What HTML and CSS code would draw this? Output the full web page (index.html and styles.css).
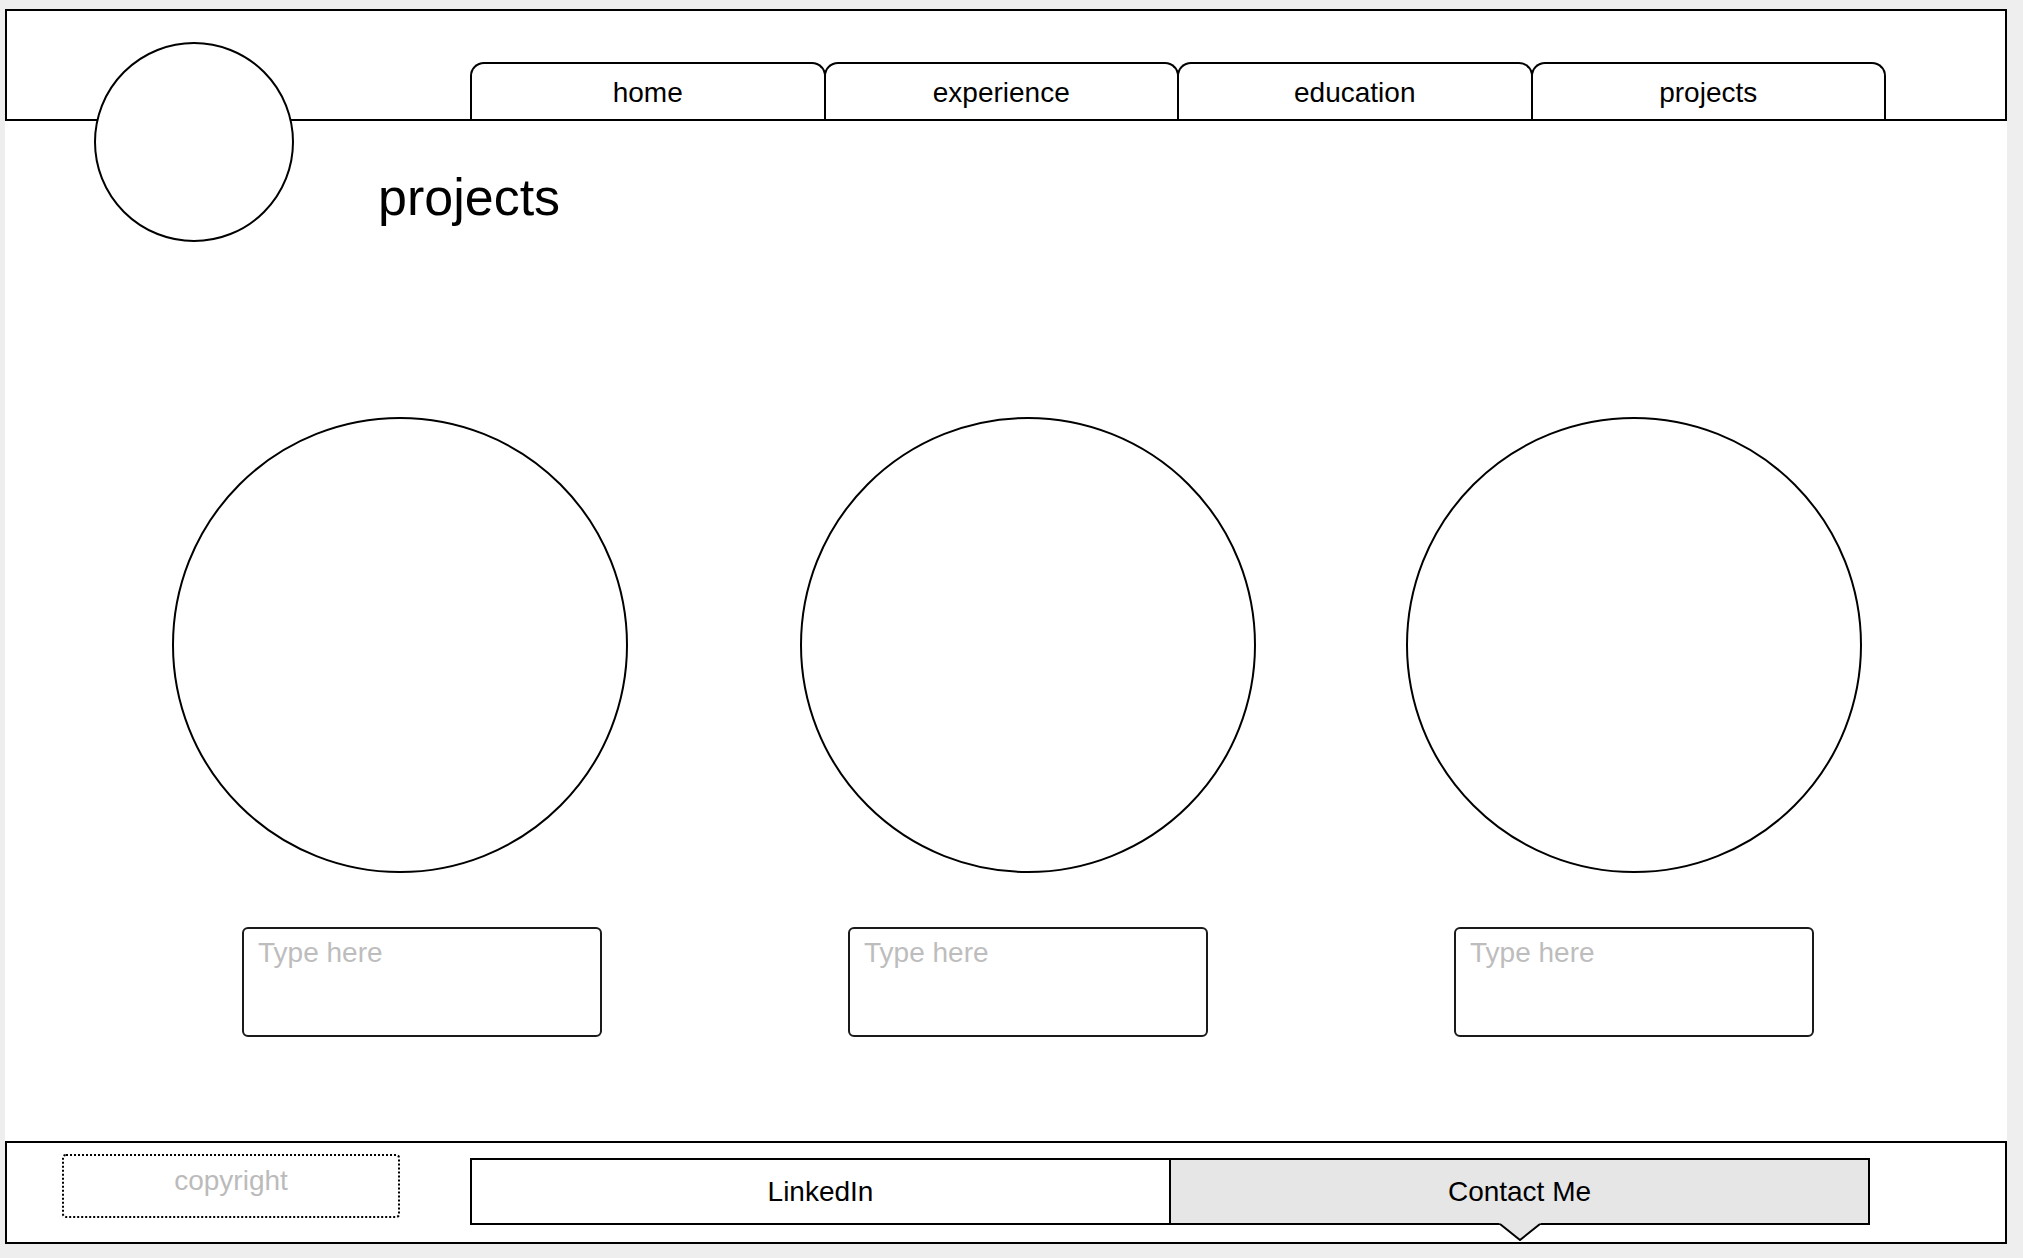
FILE: index.html
```html
<!DOCTYPE html>
<html lang="en">
<head>
    <meta charset="UTF-8">
    <meta name="viewport" content="width=device-width, initial-scale=1.0">
    <title>projects</title>
    <link rel="stylesheet" href="styles.css">
</head>
<body>

    <div class="canvas">
        <header class="site-header">
            <div class="logo"></div>
            <nav class="tabs">
                <a class="tab" href="#">home</a>
                <a class="tab" href="#">experience</a>
                <a class="tab" href="#">education</a>
                <a class="tab" href="#">projects</a>
            </nav>
        </header>

        <main class="content">
            <h1 class="page-title">projects</h1>

            <div class="projects">
                <div class="project first">
                    <div class="project-img"></div>
                    <div class="project-text">Type here</div>
                </div>
                <div class="project">
                    <div class="project-img"></div>
                    <div class="project-text">Type here</div>
                </div>
                <div class="project">
                    <div class="project-img"></div>
                    <div class="project-text">Type here</div>
                </div>
            </div>
        </main>

        <footer class="site-footer">
            <div class="copyright">copyright</div>
            <div class="links">
                <div class="link">LinkedIn</div>
                <div class="link active">Contact Me
                    <svg class="pointer" width="42" height="18" viewBox="0 0 42 18">
                        <polygon points="0,0 42,0 21,17" fill="#e6e6e6"/>
                        <polyline points="1,1 21,17 41,1" fill="none" stroke="#000" stroke-width="2"/>
                    </svg>
                </div>
            </div>
        </footer>
    </div>

</body>
</html>
```

FILE: styles.css
```css
body { margin: 0; padding: 9px 0 0 5px; background-color: #eeeeee; font-family: "Liberation Sans", Arial, Helvetica, sans-serif; color: #000; }
.canvas { position: relative; width: 2002px; height: 1235px; background-color: white; display: flex; flex-direction: column; }

/* header with the tab strip */
.site-header { box-sizing: border-box; height: 112px; border: 2px solid #000; display: flex; align-items: flex-end; padding-left: 463px; }
.logo { position: absolute; left: 89px; top: 33px; width: 200px; height: 200px; box-sizing: border-box; border: 2px solid #000; border-radius: 50%; background-color: white; z-index: 2; }
.tabs { display: flex; }
.tab { box-sizing: border-box; width: 355.5px; height: 57px; padding-top: 2px; border: 2px solid #000; border-bottom: none; border-radius: 14px 14px 0 0; display: flex; align-items: center; justify-content: center; font-size: 28px; line-height: 32px; color: #000; text-decoration: none; background-color: white; }
.tab + .tab { margin-left: -2px; }

/* main area */
.content { flex: 1; padding-top: 47px; }
.page-title { margin: 0 0 0 373px; font-size: 52px; line-height: 58px; font-weight: normal; }
.projects { display: flex; gap: 150px; margin-top: 191px; padding-left: 189px; }
.project { width: 456px; display: flex; flex-direction: column; align-items: center; }
.project-img { box-sizing: border-box; width: 456px; height: 456px; border: 2px solid #000; border-radius: 50%; flex-shrink: 0; }
.project.first .project-img { margin-right: 44px; } /* first picture sits a little left of its box */
.project-text { box-sizing: border-box; width: 360px; height: 110px; margin-top: 54px; padding: 8px 14px; border: 2px solid #1a1a1a; border-radius: 6px; font-size: 28px; line-height: 32px; color: #bdbdbd; }

/* footer */
.site-footer { box-sizing: border-box; height: 103px; border: 2px solid #000; display: flex; align-items: flex-start; padding-left: 55px; }
.copyright { box-sizing: border-box; width: 338px; height: 64px; margin-top: 11px; padding-top: 9px; border: 2px dotted #000; border-radius: 4px; text-align: center; font-size: 28px; line-height: 32px; color: #bbbbbb; }
.links { box-sizing: border-box; display: flex; width: 1400px; height: 67px; margin: 15px 0 0 70px; border: 2px solid #000; }
.link { flex: 1; display: flex; align-items: center; justify-content: center; font-size: 28px; line-height: 32px; }
.link + .link { border-left: 2px solid #000; }
.link.active { position: relative; background-color: #e6e6e6; }
.pointer { position: absolute; left: 50%; top: 100%; margin-left: -21px; }
```
